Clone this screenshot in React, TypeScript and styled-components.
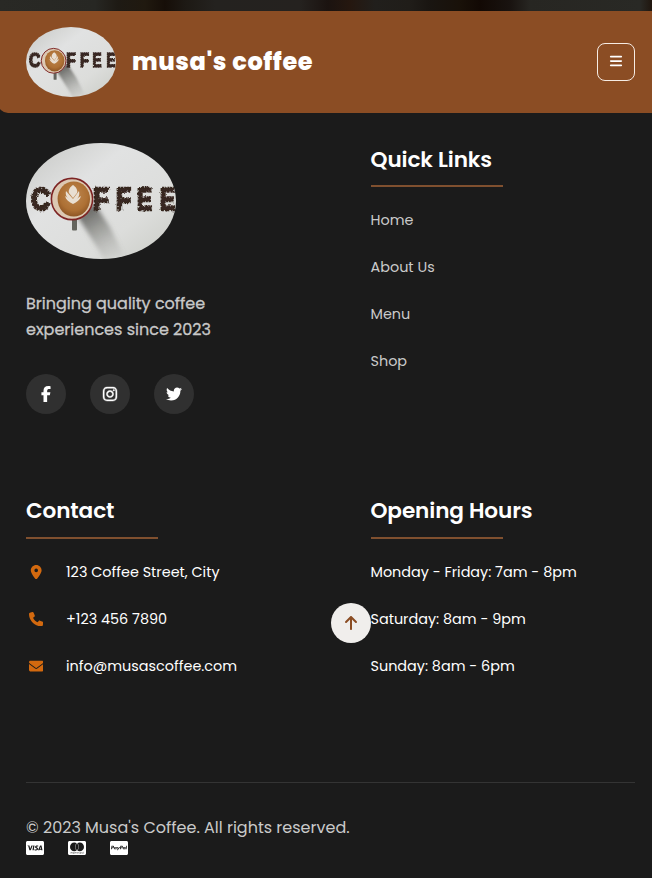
import React from "react";
import styled, { createGlobalStyle } from "styled-components";
import {
  FaArrowUp,
  FaBars,
  FaCcMastercard,
  FaCcPaypal,
  FaCcVisa,
  FaEnvelope,
  FaFacebookF,
  FaInstagram,
  FaLocationDot,
  FaPhone,
  FaTwitter,
} from "react-icons/fa6";

const GlobalStyle = createGlobalStyle`
  *, *::before, *::after { box-sizing: border-box; }
  body {
    margin: 0;
    background: #1b1b1b;
    color: #fff;
    font-family: Poppins, Inter, sans-serif;
    font-feature-settings: "cv11";
    overflow: hidden;
  }
  h1, h2, p, ul { margin: 0; padding: 0; font: inherit; }
  ul { list-style: none; }
`;

const Page = styled.div`
  height: 878px;
  overflow: hidden;
`;

const HeroEdge = styled.div`
  height: 11px;
  background: linear-gradient(
    90deg,
    #292925 0,
    #272723 95px,
    #1e1a14 118px,
    #20190f 145px,
    #160e08 165px,
    #1d1914 185px,
    #24221f 215px,
    #25221f 300px,
    #1b1310 328px,
    #25170f 350px,
    #211f1c 375px,
    #201d19 410px,
    #191511 430px,
    #191109 460px,
    #120904 480px,
    #191310 510px,
    #272622 530px,
    #292925 640px,
    #20160e 652px
  );
`;

const Header = styled.header`
  display: flex;
  align-items: center;
  height: 102px;
  margin-left: -2px;
  padding: 0 17px 0 28px;
  background: #8b4d24;
  border-radius: 0 0 0 10px;
`;

const Brand = styled.h1`
  flex: 1;
  margin-left: 16px;
  font-size: 24px;
  font-weight: 800;
  letter-spacing: 0.6px;
  line-height: 36px;
`;

const MenuButton = styled.button`
  display: flex;
  align-items: center;
  justify-content: center;
  width: 38px;
  height: 38px;
  padding: 0 0 2px;
  border: 1px solid #f6ece4;
  border-radius: 8px;
  background: transparent;
  color: #fff;
  font-size: 14px;
`;

const Footer = styled.footer`
  padding: 30px 17px 0 26px;
`;

const Columns = styled.div`
  display: grid;
  grid-template-columns: 1fr 1fr;
  grid-template-rows: 271px auto;
  column-gap: 80px;
  row-gap: 80px;
`;

const LogoFrame = styled.svg<{ $width: number; $height: number }>`
  display: block;
  flex: none;
  width: ${(p) => p.$width}px;
  height: ${(p) => p.$height}px;
  border-radius: 50%;
`;

const Tagline = styled.p`
  width: 200px;
  margin-top: 32px;
  font-size: 16px;
  line-height: 26px;
  color: #c8c8c8;
  -webkit-text-stroke: 0.3px #c8c8c8;
`;

const Socials = styled.div`
  display: flex;
  gap: 24px;
  margin-top: 31px;
`;

const SocialLink = styled.a`
  display: flex;
  align-items: center;
  justify-content: center;
  width: 40px;
  height: 40px;
  border-radius: 50%;
  background: #303030;
  font-size: 16px;
`;

const Heading = styled.h2<{ $height: number }>`
  display: flex;
  flex-direction: column;
  justify-content: space-between;
  height: ${(p) => p.$height}px;
  margin-bottom: 10px;
  font-size: 21.6px;
  font-weight: 600;
  letter-spacing: -0.1px;
  line-height: 34px;

  &::after {
    content: "";
    width: 50%;
    height: 2px;
    background: #80502f;
  }
`;

const Entry = styled.li<{ $muted?: boolean }>`
  display: flex;
  align-items: center;
  height: 47px;
  padding-bottom: 1px;
  font-size: 14.4px;
  white-space: nowrap;
  color: ${(p) => (p.$muted ? "#cacaca" : "#fff")};
`;

const EntryIcon = styled.span`
  display: flex;
  justify-content: center;
  width: 20px;
  margin-right: 20px;
  font-size: 14.4px;
  color: #d2690f;
`;

const Bottom = styled.div`
  margin-top: 92px;
  padding-top: 32px;
  border-top: 1px solid #343434;
  font-size: 16px;
  line-height: 26px;
  color: #cacaca;
`;

const Cards = styled.div`
  display: flex;
  gap: 24px;
  margin-top: -1px;
  color: #fff;

  svg { width: 18px; height: 16px; }
`;

const ToTop = styled.button`
  position: fixed;
  left: 331px;
  top: 603px;
  display: flex;
  align-items: center;
  justify-content: center;
  width: 40px;
  height: 40px;
  padding: 0;
  border: 0;
  border-radius: 50%;
  background: #f0eeec;
  color: #8b4d24;
  font-size: 16px;
`;

const letters: [string, number, number][] = [
  ["C", 5, 19],
  ["F", 67, 16],
  ["F", 90, 15],
  ["E", 111, 15],
  ["E", 134, 15],
];

function CoffeeLogo({ id, width, height }: { id: string; width: number; height: number }) {
  return (
    <LogoFrame $width={width} $height={height} viewBox="0 0 150 116" preserveAspectRatio="none">
      <defs>
        <linearGradient id={`${id}-wall`} x1="0" y1="0" x2="1" y2="1">
          <stop offset="0" stopColor="#c6c7c4" />
          <stop offset=".35" stopColor="#e1e2e2" />
          <stop offset=".7" stopColor="#dcdddb" />
          <stop offset="1" stopColor="#c9cbc5" />
        </linearGradient>
        <linearGradient id={`${id}-shade`} x1=".2" y1="0" x2=".7" y2="1">
          <stop offset="0" stopColor="#3e3e3a" stopOpacity=".85" />
          <stop offset="1" stopColor="#858681" stopOpacity=".1" />
        </linearGradient>
        <radialGradient id={`${id}-brew`} cx=".5" cy=".4" r=".65">
          <stop offset="0" stopColor="#bd8750" />
          <stop offset=".65" stopColor="#ad7034" />
          <stop offset="1" stopColor="#854e20" />
        </radialGradient>
        <filter id={`${id}-soft`} x="-30%" y="-30%" width="160%" height="160%">
          <feGaussianBlur stdDeviation="2.2" />
        </filter>
        <filter id={`${id}-beans`} x="-5%" y="-20%" width="110%" height="140%">
          <feTurbulence type="fractalNoise" baseFrequency=".35" numOctaves="2" seed="4" />
          <feDisplacementMap in="SourceGraphic" scale="3" xChannelSelector="R" yChannelSelector="G" />
          <feGaussianBlur stdDeviation=".35" />
        </filter>
      </defs>
      <rect width="150" height="116" fill={`url(#${id}-wall)`} />
      <path d="M52 74 L68 60 L84 84 L98 112 L78 116 Z" fill={`url(#${id}-shade)`} filter={`url(#${id}-soft)`} />
      <g
        filter={`url(#${id}-beans)`}
        fontFamily="Liberation Sans, sans-serif"
        fontWeight="700"
        fontSize="32"
        fill="#3a2a24"
        stroke="#35251f"
        strokeWidth="2.6"
        strokeDasharray="3 .8"
      >
        {letters.map(([letter, x, span]) => (
          <text key={x} x={x} y="67" textLength={span} lengthAdjust="spacingAndGlyphs">
            {letter}
          </text>
        ))}
      </g>
      <rect x="46" y="76" width="5" height="11.5" rx="1" fill="#64645d" />
      <circle cx="46" cy="56" r="20.6" fill="#dcc8b2" stroke="#7d2424" strokeWidth="1.6" />
      <ellipse cx="47.8" cy="56" rx="16.2" ry="17.6" fill={`url(#${id}-brew)`} />
      <g fill="#e9dfd2">
        <path d="M47 42c-3 2-5 5-4 8l4 5 4-5c1-3-1-6-4-8z" />
        <path d="M40 48c-1 4 1 8 7 11 5-3 7-6 6-11l-6 8z" />
        <path d="M39 53c1 4 4 6 8 8 4-2 7-4 8-8l-8 5z" />
      </g>
    </LogoFrame>
  );
}

const links = ["Home", "About Us", "Menu", "Shop"];

const contacts: [React.ReactNode, string][] = [
  [<FaLocationDot />, "123 Coffee Street, City"],
  [<FaPhone />, "+123 456 7890"],
  [<FaEnvelope />, "info@musascoffee.com"],
];

const hours = ["Monday - Friday: 7am - 8pm", "Saturday: 8am - 9pm", "Sunday: 8am - 6pm"];

export default function App() {
  return (
    <Page>
      <GlobalStyle />
      <HeroEdge />
      <Header>
        <CoffeeLogo id="header" width={90} height={70} />
        <Brand>musa's coffee</Brand>
        <MenuButton aria-label="Menu"><FaBars /></MenuButton>
      </Header>
      <Footer>
        <Columns>
          <section>
            <CoffeeLogo id="footer" width={150} height={116} />
            <Tagline>Bringing quality coffee experiences since 2023</Tagline>
            <Socials>
              <SocialLink><FaFacebookF /></SocialLink>
              <SocialLink><FaInstagram stroke="currentColor" strokeWidth={14} /></SocialLink>
              <SocialLink><FaTwitter /></SocialLink>
            </Socials>
          </section>
          <section>
            <Heading $height={44}>Quick Links</Heading>
            <ul>
              {links.map((label) => (
                <Entry key={label} $muted>{label}</Entry>
              ))}
            </ul>
          </section>
          <section>
            <Heading $height={45}>Contact</Heading>
            <ul>
              {contacts.map(([icon, label]) => (
                <Entry key={label}>
                  <EntryIcon>{icon}</EntryIcon>
                  {label}
                </Entry>
              ))}
            </ul>
          </section>
          <section>
            <Heading $height={45}>Opening Hours</Heading>
            <ul>
              {hours.map((label) => (
                <Entry key={label}>{label}</Entry>
              ))}
            </ul>
          </section>
        </Columns>
        <Bottom>
          <p>© 2023 Musa's Coffee. All rights reserved.</p>
          <Cards><FaCcVisa /><FaCcMastercard /><FaCcPaypal /></Cards>
        </Bottom>
      </Footer>
      <ToTop aria-label="Back to top"><FaArrowUp /></ToTop>
    </Page>
  );
}
